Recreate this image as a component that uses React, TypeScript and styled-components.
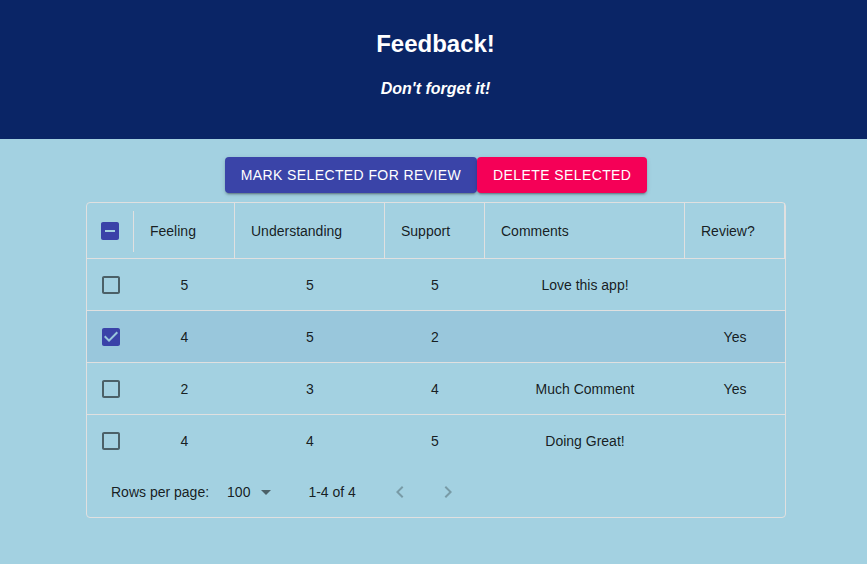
import React from "react";
import styled, { createGlobalStyle } from "styled-components";

const Global = createGlobalStyle`
  html, body { margin: 0; padding: 0; }
  body {
    background: #a3d1e1;
    font-family: "Liberation Sans", Arial, sans-serif;
    color: rgba(0,0,0,0.87);
  }
`;

const Header = styled.header`
  background: #0a2566;
  height: 139px;
  padding-left: 4px;
  box-sizing: border-box;
  display: flex;
  flex-direction: column;
  align-items: center;
  color: #fff;
`;

const Title = styled.h1`
  margin: 30px 0 0;
  font-size: 24px;
  line-height: 28px;
  font-weight: 700;
`;

const Subtitle = styled.p`
  margin: 21px 0 0;
  font-size: 16px;
  line-height: 20px;
  font-weight: 700;
  font-style: italic;
`;

const Main = styled.main`
  padding: 18px 0 0 5px;
  display: flex;
  flex-direction: column;
  align-items: center;
`;

const ButtonBar = styled.div`
  display: flex;
  height: 36px;
`;

const Button = styled.button<{ $color: string }>`
  background: ${(p) => p.$color};
  color: #fff;
  border: none;
  border-radius: 4px;
  padding: 0 16px;
  height: 36px;
  font-family: "Liberation Sans", Arial, sans-serif;
  font-size: 14px;
  letter-spacing: 0.4px;
  text-transform: uppercase;
  box-shadow: 0 3px 1px -2px rgba(0,0,0,0.2), 0 2px 2px 0 rgba(0,0,0,0.14), 0 1px 5px 0 rgba(0,0,0,0.12);
  cursor: pointer;
`;

const Grid = styled.div`
  margin-top: 9px;
  width: 698px;
  border: 1px solid #e0e0e0;
  border-radius: 4px;
  font-size: 14px;
`;

const COLS = "47px 101px 150px 100px 200px 100px";

const HeadRow = styled.div`
  display: grid;
  grid-template-columns: ${COLS};
  height: 56px;
  box-sizing: border-box;
  border-bottom: 1px solid #e0e0e0;
`;

const HeadCell = styled.div<{ $short?: boolean }>`
  display: flex;
  align-items: center;
  padding-left: 16px;
  position: relative;
  &::after {
    content: "";
    position: absolute;
    right: 0;
    top: ${(p) => (p.$short ? "8px" : "0")};
    bottom: ${(p) => (p.$short ? "6px" : "0")};
    width: 1px;
    background: #e0e0e0;
  }
`;

const CheckHeadCell = styled(HeadCell)`
  padding-left: 11px;
`;

const Row = styled.div<{ $selected?: boolean; $last?: boolean }>`
  display: grid;
  grid-template-columns: ${COLS};
  height: 52px;
  box-sizing: border-box;
  background: ${(p) => (p.$selected ? "#99c7dc" : "transparent")};
  border-bottom: ${(p) => (p.$last ? "none" : "1px solid #e0e0e0")};
`;

const Cell = styled.div`
  display: flex;
  align-items: center;
  justify-content: center;
`;

const CheckCell = styled.div`
  display: flex;
  align-items: center;
  padding-left: 12px;
`;

const Footer = styled.div`
  height: 50px;
  display: flex;
  align-items: center;
  padding-left: 24px;
  font-size: 14px;
`;

const RowsLabel = styled.span`
  margin-right: 18px;
`;

const Select = styled.span`
  display: inline-flex;
  align-items: center;
  gap: 4px;
  margin-right: 30px;
`;

const Range = styled.span`
  margin-right: 32px;
`;

const PageButtons = styled.span`
  display: inline-flex;
  gap: 24px;
  color: rgba(0,0,0,0.26);
`;

type BoxState = "off" | "on" | "mixed";

const PATHS: Record<BoxState, string> = {
  off: "M19 5v14H5V5h14m0-2H5c-1.1 0-2 .9-2 2v14c0 1.1.9 2 2 2h14c1.1 0 2-.9 2-2V5c0-1.1-.9-2-2-2z",
  on: "M19 3H5c-1.11 0-2 .9-2 2v14c0 1.1.89 2 2 2h14c1.11 0 2-.9 2-2V5c0-1.1-.89-2-2-2zm-9 14l-5-5 1.41-1.41L10 14.17l7.59-7.59L19 8l-9 9z",
  mixed: "M19 3H5c-1.1 0-2 .9-2 2v14c0 1.1.9 2 2 2h14c1.1 0 2-.9 2-2V5c0-1.1-.9-2-2-2zm-2 10H7v-2h10v2z",
};

const Box = ({ state }: { state: BoxState }) => (
  <svg width="24" height="24" viewBox="0 0 24 24">
    <path d={PATHS[state]} fill={state === "off" ? "rgba(0,0,0,0.54)" : "#3a42a8"} />
  </svg>
);

const rows = [
  { f: 5, u: 5, s: 5, c: "Love this app!", r: "", sel: false },
  { f: 4, u: 5, s: 2, c: "", r: "Yes", sel: true },
  { f: 2, u: 3, s: 4, c: "Much Comment", r: "Yes", sel: false },
  { f: 4, u: 4, s: 5, c: "Doing Great!", r: "", sel: false },
];

export default function App() {
  return (
    <>
      <Global />
      <Header>
        <Title>Feedback!</Title>
        <Subtitle>Don't forget it!</Subtitle>
      </Header>
      <Main>
        <ButtonBar>
          <Button $color="#3a44a8">Mark Selected for Review</Button>
          <Button $color="#f50057">Delete Selected</Button>
        </ButtonBar>
        <Grid>
          <HeadRow>
            <CheckHeadCell $short>
              <Box state="mixed" />
            </CheckHeadCell>
            <HeadCell>Feeling</HeadCell>
            <HeadCell>Understanding</HeadCell>
            <HeadCell>Support</HeadCell>
            <HeadCell>Comments</HeadCell>
            <HeadCell>Review?</HeadCell>
          </HeadRow>
          {rows.map((r, i) => (
            <Row key={i} $selected={r.sel} $last={i === rows.length - 1}>
              <CheckCell>
                <Box state={r.sel ? "on" : "off"} />
              </CheckCell>
              <Cell>{r.f}</Cell>
              <Cell>{r.u}</Cell>
              <Cell>{r.s}</Cell>
              <Cell>{r.c}</Cell>
              <Cell>{r.r}</Cell>
            </Row>
          ))}
          <Footer>
            <RowsLabel>Rows per page:</RowsLabel>
            <Select>
              100
              <svg width="24" height="24" viewBox="0 0 24 24">
                <path d="M7 10l5 5 5-5z" fill="rgba(0,0,0,0.54)" />
              </svg>
            </Select>
            <Range>1-4 of 4</Range>
            <PageButtons>
              <svg width="24" height="24" viewBox="0 0 24 24">
                <path d="M15.41 7.41L14 6l-6 6 6 6 1.41-1.41L10.83 12z" fill="currentColor" />
              </svg>
              <svg width="24" height="24" viewBox="0 0 24 24">
                <path d="M10 6L8.59 7.41 13.17 12l-4.58 4.59L10 18l6-6z" fill="currentColor" />
              </svg>
            </PageButtons>
          </Footer>
        </Grid>
      </Main>
    </>
  );
}
